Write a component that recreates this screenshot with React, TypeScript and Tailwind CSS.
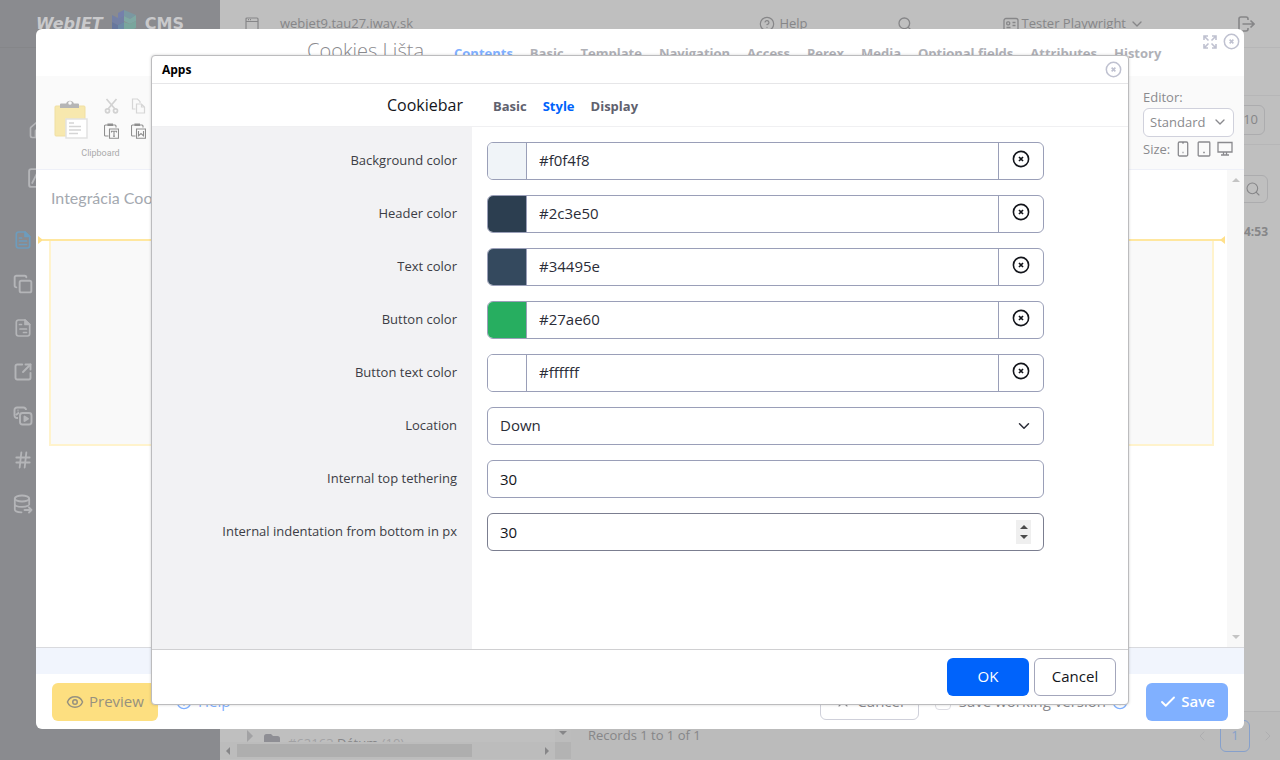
import React from "react";
import {
  Check,
  ChevronDown,
  ChevronLeft,
  ChevronRight,
  CircleHelp,
  Copy,
  Eye,
  Hash,
  Home,
  Info,
  Search,
  SquareArrowOutUpRight,
  X,
} from "lucide-react";

type IconProps = { className?: string };

function CircleX({ className }: IconProps) {
  return (
    <svg viewBox="0 0 18 18" className={className} fill="none" stroke="currentColor" aria-hidden="true">
      <circle cx="9" cy="9" r="7.600" strokeWidth="1.600" />
      <path d="M7 7l4 4M11 7l-4 4" strokeWidth="1.700" />
    </svg>
  );
}

function Maximize({ className }: IconProps) {
  return (
    <svg viewBox="0 0 14 14" className={className} fill="none" stroke="currentColor" strokeWidth="1.600" aria-hidden="true">
      <path d="M1 5V1h4M1 1l4.500 4.500M9 1h4v4M13 1L8.500 5.500M1 9v4h4M1 13l4.500-4.500M13 9v4H9M13 13L8.500 8.500" />
    </svg>
  );
}

function WindowIcon({ className }: IconProps) {
  return (
    <svg viewBox="0 0 14 14" className={className} fill="none" stroke="currentColor" strokeWidth="1.200" aria-hidden="true">
      <rect x="1" y="1" width="12" height="12" rx="1" />
      <path d="M1 4.500h12M3 2.700h1M5 2.700h1" />
    </svg>
  );
}

function CardIcon({ className }: IconProps) {
  return (
    <svg viewBox="0 0 16 14" className={className} fill="none" stroke="currentColor" strokeWidth="1.300" aria-hidden="true">
      <path d="M1 13V3.500A2 2 0 0 1 3 1.500h10a2 2 0 0 1 2 2V13z" />
      <rect x="3.700" y="4.800" width="3" height="3" rx="1" />
      <path d="M3.500 10.500h4M9.500 5.500h3M9.500 8.500h3" />
    </svg>
  );
}

function LogOutIcon({ className }: IconProps) {
  return (
    <svg viewBox="0 0 17 16" className={className} fill="none" stroke="currentColor" strokeWidth="1.600" aria-hidden="true">
      <path d="M10 4V3a2 2 0 0 0-2-2H3a2 2 0 0 0-2 2v10a2 2 0 0 0 2 2h5a2 2 0 0 0 2-2v-1M4.500 8H16M12.500 4.500L16 8l-3.500 3.500" />
    </svg>
  );
}

function Cube({ className }: IconProps) {
  return (
    <svg viewBox="0 0 26 24" className={className} aria-hidden="true">
      <path d="M1 5l6 3 6-3v7l-6 3-6-3z" fill="#7480a4" />
      <path d="M1 12l6 3 6-3v7l-6 3-6-3z" fill="#67779e" />
      <path d="M7 3l6-3v6l-6 3z" fill="#7580ab" />
      <path d="M13 0l12 5-6 4-6-3z" fill="#7a98a2" />
      <path d="M13 6l6 3 6-4v6l-6 3-6-3z" fill="#7fa8a3" />
      <path d="M13 12l6 2 6-3v7l-12 5z" fill="#79a69d" />
      <path d="M7 15l6-3v11l-6-2z" fill="#6d8aa6" />
    </svg>
  );
}

function PageIcon({ className, short }: IconProps & { short?: boolean }) {
  return (
    <svg viewBox="0 0 18 20" className={className} fill="none" stroke="currentColor" strokeWidth="1.700" strokeLinecap="round" strokeLinejoin="round" aria-hidden="true">
      <path d="M11 2H4.500A2.200 2.200 0 0 0 2.300 4.200v11.600A2.200 2.200 0 0 0 4.500 18h9a2.200 2.200 0 0 0 2.200-2.200V6.500z" />
      <path d="M11 2v4.500h4.700z" fill="currentColor" />
      <path d={short ? "M5.500 6.500h2M6 11h6.500M9.500 14.500h3" : "M5.500 8h2M5.500 11h7M5.500 14.500h7"} />
    </svg>
  );
}

function MediaIcon({ className }: IconProps) {
  return (
    <svg viewBox="0 0 20 20" className={className} fill="none" stroke="currentColor" strokeWidth="1.900" strokeLinejoin="round" aria-hidden="true">
      <path d="M5 12H4a2.500 2.500 0 0 1-2.500-2.500V4A2.500 2.500 0 0 1 4 1.500h6.500A2.500 2.500 0 0 1 13 4M3 9l3-2.500M4.500 4.500h1" />
      <rect x="7" y="7" width="11.500" height="11.500" rx="2.500" />
      <path d="M11.500 10.500v4.500l3.500-2.200z" fill="currentColor" />
    </svg>
  );
}

function DatabaseExport({ className }: IconProps) {
  return (
    <svg viewBox="0 0 20 20" className={className} fill="none" stroke="currentColor" strokeWidth="1.800" strokeLinecap="round" strokeLinejoin="round" aria-hidden="true">
      <ellipse cx="9" cy="4.500" rx="7.200" ry="3" />
      <path d="M1.800 4.500v11c0 1.600 3 2.700 6.700 2.800M16.200 4.500v6M1.800 10c0 1.700 3.200 2.900 7.200 2.900 2.500 0 4.700-.5 6-1.200M11.500 16h7M16 13.500l2.500 2.500-2.500 2.500" />
    </svg>
  );
}

function ChartIcon({ className }: IconProps) {
  return (
    <svg viewBox="0 0 18 18" className={className} fill="none" stroke="currentColor" strokeWidth="1.700" strokeLinejoin="round" aria-hidden="true">
      <rect x="1" y="1" width="16" height="16" rx="2" />
      <path d="M3.500 14L8 5l3 6 2-3" />
    </svg>
  );
}

function ClipboardBig({ className }: IconProps) {
  return (
    <svg viewBox="0 0 34 42" className={className} aria-hidden="true">
      <rect x="1" y="8" width="30" height="30" rx="1" fill="#f7e8ae" stroke="#f0dfa2" />
      <path d="M6 10V6.500a1 1 0 0 1 1-1h5.200a4 4 0 0 1 7.600 0H24a1 1 0 0 1 1 1V10z" fill="#b5b5b5" />
      <circle cx="16" cy="5" r="1.800" fill="#fafafa" />
      <rect x="12" y="21" width="21" height="19" fill="#fff" stroke="#e2e2e2" strokeWidth="1.500" />
      <path d="M15 25h5M15 28.500h12M15 32h12M15 35.500h9" stroke="#d5d5d5" strokeWidth="1.300" />
    </svg>
  );
}

function Scissors({ className }: IconProps) {
  return (
    <svg viewBox="0 0 14 16" className={className} fill="none" stroke="currentColor" strokeWidth="1.700" aria-hidden="true">
      <path d="M2 1l8.500 10M12 1L3.500 11" />
      <circle cx="3" cy="12.800" r="2" />
      <circle cx="11" cy="12.800" r="2" />
    </svg>
  );
}

function CopyPages({ className }: IconProps) {
  return (
    <svg viewBox="0 0 14 16" className={className} fill="none" stroke="currentColor" strokeWidth="1.200" aria-hidden="true">
      <path d="M4 11H1V1h5l2.500 2.500V5" />
      <path d="M5 6h5l3 3v6H5zM10 6v3h3" />
    </svg>
  );
}

function PasteAs({ className, word }: IconProps & { word?: boolean }) {
  return (
    <svg viewBox="0 0 15 16" className={className} fill="none" stroke="currentColor" strokeWidth="1.100" aria-hidden="true">
      <path d="M4.500 13H1.500a1 1 0 0 1-1-1V3a1 1 0 0 1 1-1H4M8.500 2H11a1 1 0 0 1 1 1v1.500" />
      <path d="M4 2.500V1h4.500v1.500z" fill="currentColor" />
      <path d="M5.500 6h9v9.300h-9z" />
      <path d={word ? "M7.500 8v4.800l2.500-2.300 2.500 2.300V8" : "M7.500 9.500V8.300h5v1.200M10 8.300v5M9 13.200h2"} />
    </svg>
  );
}

function Arrow({ className, d }: IconProps & { d: string }) {
  return (
    <svg viewBox="0 0 8 8" className={className} fill="currentColor" aria-hidden="true">
      <path d={d} />
    </svg>
  );
}

const UP = "M0 6l4-4 4 4z";
const DOWN = "M0 2l4 4 4-4z";
const LEFT = "M6 0L2 4l4 4z";
const RIGHT = "M2 0l4 4-4 4z";

function DeviceIcon({ className, kind }: IconProps & { kind: "phone" | "tablet" | "desktop" }) {
  return (
    <svg viewBox="0 0 16 16" className={className} fill="none" stroke="currentColor" strokeWidth="1.300" aria-hidden="true">
      {kind === "phone" && <path d="M4.500 1h7a1.200 1.200 0 0 1 1.200 1.200v11.600a1.200 1.200 0 0 1-1.200 1.200h-7a1.200 1.200 0 0 1-1.200-1.200V2.200A1.200 1.200 0 0 1 4.500 1zM7 1.800h2M7.500 11.500h1" />}
      {kind === "tablet" && <path d="M3 1h10a.8.8 0 0 1 .8.8v12.400a.8.8 0 0 1-.8.800H3a.8.8 0 0 1-.8-.8V1.800A.8.8 0 0 1 3 1zM7.200 11.500h1.600" />}
      {kind === "desktop" && <path d="M1 1.500h14v9.500H1zM6.500 11v3M9.500 11v3M4 14h8" />}
    </svg>
  );
}

function Sidebar() {
  return (
    <aside className="flex w-[220px] shrink-0 flex-col bg-[#8a8b8f] text-[#b4b5b8]">
      <div className="flex h-12 items-center gap-2 border-b border-[#858689] pl-9 font-['DejaVu_Sans',sans-serif] text-[16px] font-bold text-[#c9c9cb]">
        <span className="italic">WebJET</span>
        <Cube className="-mt-1 h-6 w-[26px]" />
        <span>CMS</span>
      </div>
      <nav className="flex flex-col pt-[72px]" aria-label="Main menu">
        <a href="#home" aria-label="Home" className="flex h-5 items-center pl-7">
          <Home className="size-5" />
        </a>
        <a href="#stats" aria-label="Statistics" className="mt-7 flex h-5 items-center pl-7">
          <ChartIcon className="size-5" />
        </a>
        <div className="mt-[42px] flex flex-col gap-6 pl-[13px]">
          <a href="#pages" aria-label="Web pages" className="text-[#6d9cbd]"><PageIcon className="size-5" /></a>
          <a href="#copies" aria-label="Copies"><Copy className="size-5 rotate-0" strokeWidth={2.3} /></a>
          <a href="#templates" aria-label="Templates"><PageIcon short className="size-5" /></a>
          <a href="#links" aria-label="Links"><SquareArrowOutUpRight className="size-5" strokeWidth={2.3} /></a>
          <a href="#media" aria-label="Media"><MediaIcon className="size-5" /></a>
          <a href="#tags" aria-label="Tags"><Hash className="size-5" strokeWidth={2.2} /></a>
          <a href="#export" aria-label="Export"><DatabaseExport className="size-5" /></a>
        </div>
      </nav>
    </aside>
  );
}

function Background() {
  return (
    <div className="flex min-h-screen">
      <Sidebar />
      <div className="flex min-w-0 flex-1 flex-col bg-[#bfbfbf] text-[#868688]">
        <header className="flex h-12 items-center border-b border-[#b6b6b7] pr-[25px] pl-[25px] text-[13px]">
          <WindowIcon className="size-3.5" />
          <span className="ml-[21px]">webjet9.tau27.iway.sk</span>
          <a href="#help" className="ml-auto flex items-center gap-1">
            <CircleHelp className="size-4" strokeWidth={1.8} />
            Help
          </a>
          <button type="button" aria-label="Search" className="ml-[89px]">
            <Search className="size-4" strokeWidth={2} />
          </button>
          <button type="button" className="ml-[90px] flex items-center gap-[3px]">
            <CardIcon className="h-3.5 w-4" />
            Tester Playwright
            <ChevronDown className="size-4" strokeWidth={2} />
          </button>
          <button type="button" aria-label="Log out" className="ml-[93px]">
            <LogOutIcon className="h-4 w-[17px]" />
          </button>
        </header>
        <div className="h-12 border-b border-[#b6b6b7]" />
        <div className="flex h-[49px] items-center justify-end border-b border-[#b6b6b7] pr-[15px]">
          <span className="flex h-[30px] w-[60px] items-center justify-end rounded-md border border-[#acacae] pr-1.5 text-[13px]">10</span>
        </div>
        <div className="mt-[30px] flex justify-end pr-3">
          <span className="flex h-7 w-10 items-center justify-end rounded-md border border-[#acacae] pr-1.5">
            <Search className="size-4" strokeWidth={1.6} />
          </span>
        </div>
        <p className="mt-5 pr-3 text-right text-[12px] font-bold">14:53</p>
        <div className="mt-auto flex">
          <div className="flex w-[351px] flex-col">
            <div className="flex h-[31px]">
              <div className="flex h-[31px] flex-1 items-end gap-2 overflow-hidden pl-6 text-[13px] text-[#a2a2a4]">
                <Arrow d={RIGHT} className="size-3" />
                <svg viewBox="0 0 16 10" className="h-2 w-4" fill="#8e8e94" preserveAspectRatio="xMidYMin slice" aria-hidden="true">
                  <path d="M0 10V2.500A2.500 2.500 0 0 1 2.500 0H7l2 2h4.500A2.500 2.500 0 0 1 16 4.500V10z" />
                </svg>
                <span className="h-2 leading-[18px]">#62163 <span className="text-[#868688]">Dátum</span> (10)</span>
              </div>
              <span className="flex w-4 items-center justify-center bg-[#bcbcbc]">
                <Arrow d={DOWN} className="mt-3 size-2" />
              </span>
            </div>
            <div className="flex h-[17px] items-center bg-[#bcbcbc] pl-1">
              <Arrow d={LEFT} className="mr-[5px] size-2" />
              <span className="h-[13px] w-[235px] bg-[#aeaeae]" />
              <Arrow d={RIGHT} className="ml-auto size-2" />
              <span className="ml-1 h-full w-4 bg-[#b3b3b3]" />
            </div>
          </div>
          <div className="flex h-[49px] flex-1 items-center border-t border-[#b2b2b3] bg-[#bbbbbb] pr-1 pl-[17px] text-[13px]">
            Records 1 to 1 of 1
            <div className="ml-auto flex items-center gap-2.5">
              <ChevronLeft className="size-4 text-[#aeaeb0]" strokeWidth={1.5} />
              <button type="button" className="h-8 w-[30px] rounded-md border border-[#86a0cb] text-[#86a0cb]">1</button>
              <ChevronRight className="size-4 text-[#aeaeb0]" strokeWidth={1.5} />
            </div>
          </div>
        </div>
      </div>
    </div>
  );
}

const editorTabs = ["Contents", "Basic", "Template", "Navigation", "Access", "Perex", "Media", "Optional fields", "Attributes", "History"];

function EditorWindow() {
  return (
    <section aria-label="Cookies Lišta" className="absolute inset-x-9 top-[29px] bottom-[31px] flex flex-col overflow-hidden rounded-md bg-white text-[#8a8a8e]">
      <header className="flex h-[47px] shrink-0 items-center">
        <h1 className="w-[388px] shrink-0 pb-1 text-right text-[20px] leading-7 font-light">Cookies Lišta</h1>
        <nav className="ml-[30px] flex gap-[17px] pt-0.5 text-[13px] font-bold whitespace-nowrap text-[#b0b1b7]">
          {editorTabs.map((tab, i) => (
            <a key={tab} href="#tab" className={i === 0 ? "text-[#7fb0ff]" : ""}>{tab}</a>
          ))}
        </nav>
        <div className="mr-1 ml-auto flex items-center gap-1.5 self-start pt-1 text-[#bfc1d0]">
          <button type="button" aria-label="Maximize"><Maximize className="size-3.5" /></button>
          <button type="button" aria-label="Close editor"><CircleX className="size-[17px]" /></button>
        </div>
      </header>
      <div className="flex h-[94px] shrink-0 items-start justify-between border-b border-[#eef0f8] bg-[#fafafa] pr-2.5 pl-[18px]">
        <div className="flex w-[93px] flex-col items-center pt-[22px]">
          <div className="flex w-full items-start">
            <ClipboardBig className="h-[42px] w-[34px]" />
            <div className="ml-4 grid grid-cols-2 gap-x-3 gap-y-[9px]">
              <Scissors className="h-4 w-[15px] text-[#d2d2d2]" />
              <CopyPages className="h-4 w-[15px] text-[#d6d6d6]" />
              <PasteAs className="h-4 w-[15px] text-[#8f8f8f]" />
              <PasteAs word className="h-4 w-[15px] text-[#8f8f8f]" />
            </div>
          </div>
          <span className="mt-[7px] font-[Roboto,sans-serif] text-[9px] leading-3 text-[#aaaaaa]">Clipboard</span>
        </div>
        <div className="flex w-[91px] flex-col pt-[11px] text-[13px]">
          <label htmlFor="editor-type" className="leading-[21px]">Editor:</label>
          <span className="relative flex">
            <select id="editor-type" className="h-[29px] w-full appearance-none rounded-md border border-[#d0d1dc] bg-white pl-1.5 text-[13px]">
              <option>Standard</option>
            </select>
            <ChevronDown className="pointer-events-none absolute top-1.5 right-1.5 size-4" strokeWidth={2} />
          </span>
          <div className="flex items-center gap-[5px] leading-6">
            Size:
            <DeviceIcon kind="phone" className="size-4" />
            <DeviceIcon kind="tablet" className="size-4" />
            <DeviceIcon kind="desktop" className="size-4" />
          </div>
        </div>
      </div>
      <div className="flex min-h-0 flex-1">
        <div className="min-w-0 flex-1">
          <p className="pt-4 pl-[15px] font-[Lato,sans-serif] text-[16px] leading-6 text-[#a4a9b0]">Integrácia Cookies</p>
          <div className="mt-[26px] flex h-2 items-center px-0.5 text-[#ffe08a]">
            <Arrow d="M0 0l5 4-5 4z" className="size-2" />
            <span className="-ml-1 h-0.5 flex-1 bg-[#ffe79f]" />
            <Arrow d="M8 0L3 4l5 4z" className="-ml-1 size-2" />
          </div>
          <div className="mx-[13px] -mt-1 h-[206px] border-2 border-t-0 border-[#fff3cc] bg-[#f9f9f9]" />
        </div>
        <div className="flex w-[17px] flex-col items-center justify-between bg-[#f8f8f8] py-1.5 text-[#c4c4c4]">
          <Arrow d={UP} className="size-2" />
          <Arrow d={DOWN} className="size-2" />
        </div>
      </div>
      <div className="h-[27px] shrink-0 border-t border-[#d9dade] bg-[#f1f5fd]" />
      <footer className="flex h-[55px] shrink-0 items-center px-4 text-[15px]">
        <button type="button" className="flex h-[38px] items-center gap-[5px] rounded-md bg-[#fddf80] px-3.5 text-[#96917f]">
          <Eye className="size-[18px]" strokeWidth={2} />
          Preview
        </button>
        <a href="#help" className="ml-[18px] flex items-center gap-1.5 text-[#7fb0ff]">
          <CircleHelp className="size-4" />
          Help
        </a>
        <button type="button" className="ml-auto flex h-9 items-center gap-1.5 rounded-md border border-[#cfd0da] px-3.5">
          <X className="size-4" strokeWidth={1.7} />
          Cancel
        </button>
        <label className="ml-4 flex items-center gap-2">
          <input type="checkbox" className="size-4 appearance-none rounded border border-[#dcdce2]" />
          Save working version
        </label>
        <Info className="ml-1.5 size-4 text-[#7fb0ff]" />
        <button type="button" className="ml-[18px] flex h-[38px] w-[82px] items-center justify-center gap-1 rounded-md bg-[#80b0ff] font-semibold text-white">
          <Check className="size-[18px]" strokeWidth={2.5} />
          Save
        </button>
      </footer>
    </section>
  );
}

const colors = [
  { id: "bg", label: "Background color", value: "#f0f4f8", swatch: "bg-[#f0f4f8]" },
  { id: "header", label: "Header color", value: "#2c3e50", swatch: "bg-[#2c3e50]" },
  { id: "text", label: "Text color", value: "#34495e", swatch: "bg-[#34495e]" },
  { id: "button", label: "Button color", value: "#27ae60", swatch: "bg-[#27ae60]" },
  { id: "button-text", label: "Button text color", value: "#ffffff", swatch: "bg-white" },
];

function Row({ id, label, children }: { id: string; label: string; children: React.ReactNode }) {
  return (
    <div className="flex">
      <div className="flex w-80 shrink-0 items-center justify-end bg-[#f2f2f4] pt-3.5 pr-[15px]">
        <label htmlFor={id} className="text-[13px] text-[#3c3d45]">{label}</label>
      </div>
      <div className="min-w-0 flex-1 pt-[15px] pr-[84px] pl-[15px]">{children}</div>
    </div>
  );
}

function AppsDialog() {
  return (
    <div className="absolute inset-x-0 top-[55px] flex justify-center px-4">
      <div role="dialog" aria-label="Apps" className="w-full max-w-[978px] rounded-sm border border-[#bcbcbe] bg-white shadow-[0_0_3px_rgba(0,0,0,0.18)]">
        <header className="flex h-7 items-center justify-between border-b border-[#e6e6e8] pr-1.5 pl-2.5">
          <h2 className="text-[12px] font-bold text-black">Apps</h2>
          <button type="button" aria-label="Close" className="text-[#bfc1d0]"><CircleX className="size-[17px]" /></button>
        </header>
        <div className="flex h-[43px] items-center border-b border-[#f0f0f2]">
          <h3 className="w-[311px] text-right text-[16px] text-[#13151b]">Cookiebar</h3>
          <nav className="ml-[30px] flex gap-4 pt-1 text-[13px] font-bold text-[#5f616e]">
            <a href="#basic">Basic</a>
            <a href="#style" className="text-[#0063fb]">Style</a>
            <a href="#display">Display</a>
          </nav>
        </div>
        <form className="flex flex-col" onSubmit={(e) => e.preventDefault()}>
          {colors.map((c) => (
            <Row key={c.id} id={c.id} label={c.label}>
              <div className="flex h-[38px] overflow-hidden rounded-md border border-[#9a9fb8]">
                <span className={`w-[39px] border-r border-[#9a9fb8] ${c.swatch}`} />
                <input id={c.id} type="text" defaultValue={c.value} className="min-w-0 flex-1 px-3 pb-px text-[15px] text-[#2b2d38]" />
                <button type="button" aria-label={`Clear ${c.label}`} className="flex w-[45px] items-center justify-center border-l border-[#9a9fb8] pb-1 text-[#13151b]">
                  <CircleX className="size-[18px]" />
                </button>
              </div>
            </Row>
          ))}
          <Row id="location" label="Location">
            <div className="relative">
              <select id="location" className="block h-[38px] w-full appearance-none rounded-md border border-[#9a9fb8] bg-white px-3 pb-px text-[15px] text-[#2b2d38]">
                <option>Down</option>
              </select>
              <ChevronDown className="pointer-events-none absolute top-2.5 right-[11px] size-[18px] text-[#2b2d38]" />
            </div>
          </Row>
          <Row id="top" label="Internal top tethering">
            <input id="top" type="text" inputMode="numeric" defaultValue="30" className="block h-[38px] w-full rounded-md border border-[#9a9fb8] px-3 text-[15px] text-[#13151b]" />
          </Row>
          <Row id="bottom" label="Internal indentation from bottom in px">
            <div className="relative">
              <input
                id="bottom"
                type="number"
                defaultValue="30"
                className="block h-[38px] w-full rounded-md border border-[#7b7e90] px-3 text-[15px] text-[#13151b] [&::-webkit-inner-spin-button]:appearance-none"
              />
              <span className="pointer-events-none absolute top-[7px] right-[13px] flex h-6 w-[15px] flex-col items-center justify-center gap-0.5 bg-[#efefef] text-[#4a4a4a]">
                <Arrow d={UP} className="size-2" />
                <Arrow d={DOWN} className="size-2" />
              </span>
            </div>
          </Row>
          <div className="h-[98px] w-80 bg-[#f2f2f4]" />
          <footer className="flex items-center justify-end gap-[5px] border-t border-[#d0d0d2] pt-2 pr-3 pb-2">
            <button type="submit" className="h-[38px] w-[82px] rounded-md bg-[#0063fb] pb-0.5 text-[15px] font-medium text-white">OK</button>
            <button type="button" className="h-[38px] w-[82px] rounded-md border border-[#a3a6bb] pb-0.5 text-[15px] text-[#13151b]">Cancel</button>
          </footer>
        </form>
      </div>
    </div>
  );
}

export default function App() {
  return (
    <div className="relative min-h-screen overflow-hidden font-['Open_Sans','Noto_Sans',sans-serif]">
      <Background />
      <EditorWindow />
      <AppsDialog />
    </div>
  );
}
